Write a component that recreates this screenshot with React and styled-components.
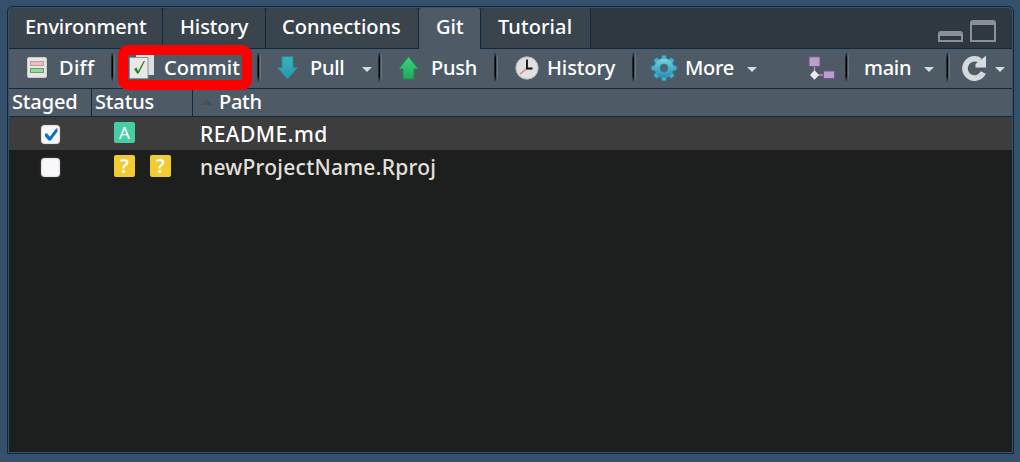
import React from 'react';
import styled, { createGlobalStyle } from 'styled-components';

const Global = createGlobalStyle`
  * { box-sizing: border-box; }
  html, body, #root { height: 100%; }
  body {
    margin: 0;
    overflow: hidden;
    background: #34506b;
    color: #fff;
    font: 500 20px/26px 'Noto Sans', 'Open Sans', sans-serif;
  }
  svg { display: block; flex: none; overflow: visible; }
`;

const line = '#0f2a40';

const Page = styled.div`
  height: 462px;
  padding: 6px 6px 8px 7px;
`;
const Pane = styled.section`
  position: relative;
  height: 100%;
  display: flex;
  flex-direction: column;
  border: 1px solid ${line};
  border-radius: 5px 5px 0 0;
  padding: 1px;
  background: #34506b;
`;
const TabStrip = styled.nav`
  display: flex;
  height: 40px;
  background: #2f3841;
  border-radius: 4px 4px 0 0;
`;
const Tab = styled.div`
  width: ${(p) => p.$width}px;
  height: ${(p) => (p.$active ? 41 : 40)}px;
  position: relative;
  padding: 6px 0 0 ${(p) => p.$pad}px;
  border-right: 1px solid ${line};
  border-radius: 3px 3px 0 0;
  background: ${(p) => (p.$active ? '#4e5b66' : '#3a444c')};
  letter-spacing: ${(p) => p.$track || 0}px;
  white-space: nowrap;
`;
const WindowButtons = styled.div`
  display: flex;
  align-items: flex-end;
  gap: 7px;
  margin: 0 16px 6px auto;
`;
const Toolbar = styled.div`
  display: flex;
  height: 41px;
  border: solid ${line};
  border-width: 1px 0;
  background: #4e5b66;
`;
const Tool = styled.div`
  display: flex;
  align-items: center;
  width: ${(p) => p.$width}px;
  padding: 0 0 2px ${(p) => p.$pad}px;
  white-space: nowrap;
`;
const Label = styled.span`
  margin-left: ${(p) => p.$gap || 0}px;
  letter-spacing: ${(p) => p.$track || 0}px;
`;
const Separator = styled.i`
  flex: none;
  width: 4px;
  height: 30px;
  margin-top: 3px;
  background: linear-gradient(90deg, #20272d 0 1px, #000 1px 2px, #485560 2px 3px, #687480 3px);
  mask-image: linear-gradient(transparent, #000 20% 80%, transparent);
`;
const Caret = styled.i`
  margin: 4px 0 0 ${(p) => p.$gap}px;
  border: solid transparent;
  border-width: 5px 5px 0;
  border-top-color: #d9dbdd;
`;
const Header = styled.div`
  display: grid;
  grid-template-columns: 83px 101px 1fr;
  height: 28px;
  background: #4e5b66;
  border-bottom: 1px solid ${line};
`;
const HeaderCell = styled.div`
  display: flex;
  align-items: center;
  padding: 0 0 1px ${(p) => p.$pad}px;
  border-right: ${(p) => (p.$last ? '0' : `1px solid ${line}`)};
  letter-spacing: ${(p) => p.$track || 0}px;
`;
const SortArrow = styled.i`
  margin-right: 6px;
  border: solid transparent;
  border-width: 0 6px 6px;
  border-bottom-color: #46515a;
`;
const Files = styled.div`
  flex: 1;
  background: #1d1f1e;
`;
const FileRow = styled.div`
  display: grid;
  grid-template-columns: 83px 101px 1fr;
  height: 33px;
  background: ${(p) => (p.$selected ? '#3d3d3d' : 'transparent')};
  color: ${(p) => (p.$selected ? '#fff' : '#e5e0dc')};
`;
const CheckCell = styled.div`
  padding: 8px 0 0 32px;
`;
const Checkbox = styled.div`
  width: 19px;
  height: 19px;
  border-radius: 4px;
  background: #f8f8fb;
  box-shadow: inset 0 0 2px #aaa, 0 0 2px #666;
`;
const StatusCell = styled.div`
  display: flex;
  gap: 15px;
  padding: 5px 0 0 22px;
`;
const Badge = styled.span`
  width: 21px;
  height: ${(p) => (p.$added ? 21 : 22)}px;
  border-radius: 2px;
  background: ${(p) => (p.$added ? '#47cda4' : '#f2cb31')};
  color: #fff;
  font-size: ${(p) => (p.$added ? 17 : 19)}px;
  font-weight: ${(p) => (p.$added ? 400 : 600)};
  line-height: 22px;
  text-align: center;
`;
const Path = styled.div`
  padding: 4px 0 0 7px;
  font-size: 21px;
  letter-spacing: ${(p) => p.$track}px;
`;
const Highlight = styled.div`
  position: absolute;
  left: 110px;
  top: 38px;
  width: 134px;
  height: 45px;
  border: 10px solid #f00;
  border-radius: 10px;
  pointer-events: none;
`;

const DiffIcon = () => (
  <svg width="20" height="21" viewBox="0 0 20 21">
    <rect x=".5" y=".5" width="19" height="20" rx="1.5" fill="#e6e7e5" stroke="#c9cdcb" />
    <rect x="3.5" y="4.5" width="13" height="4" fill="#e9c0c2" stroke="#c99699" />
    <rect x="3.5" y="11.5" width="13" height="4" fill="#98d49b" stroke="#5fa66a" />
  </svg>
);
const CommitIcon = () => (
  <svg width="25" height="25" viewBox="0 0 25 25">
    <path d="M7 0h18v20H7z" fill="#dcdfdf" />
    <path d="M.5 2.5h18.500v21H.5z" fill="#e8e9e7" stroke="#8b9296" />
    <path d="M5 14l2.500-1.500 1.700 3.500 5.500-10 1.300 0-6.300 12.500h-1.700z" fill="#26862a" />
  </svg>
);
const Arrow = ({ up }) => (
  <svg width="21" height="24" viewBox="0 0 21 24">
    <defs>
      <linearGradient id={up ? 'push' : 'pull'} x2="0" y2="1">
        <stop stopColor={up ? '#43cf80' : '#3bb2ba'} />
        <stop offset="1" stopColor={up ? '#21a95d' : '#2798aa'} />
      </linearGradient>
    </defs>
    <path
      d={up ? 'M10.500 .7L20.300 13H16v10H5V13H.7z' : 'M5 .7h11v11h4.300L10.500 23 .7 11.700H5z'}
      fill={`url(#${up ? 'push' : 'pull'})`}
      stroke={up ? '#168d4b' : '#258d99'}
      strokeLinejoin="round"
    />
  </svg>
);
const ClockIcon = () => (
  <svg width="24" height="24" viewBox="0 0 24 24">
    <circle cx="12" cy="12" r="11.200" fill="#dfe0df" stroke="#b0b3b3" />
    <path d="M12 12.500L5 18" stroke="#e97c7b" strokeWidth="1.400" />
    <path d="M12 3.500v9h5.500" fill="none" stroke="#111" strokeWidth="1.800" />
  </svg>
);
const GearIcon = () => (
  <svg width="28" height="28" viewBox="-14 -14 28 28">
    <defs>
      <linearGradient id="gear" x2="0" y2="1">
        <stop stopColor="#7bd4de" />
        <stop offset="1" stopColor="#258eb5" />
      </linearGradient>
      <path id="tooth" d="M-3.500-8L-2-13H2L3.500-8z" />
    </defs>
    <g stroke="#2b7890" strokeWidth="1" strokeLinejoin="round" fill="#49adc7">
      {[0, 45, 90, 135, 180, 225, 270, 315].map((a) => (
        <use key={a} href="#tooth" transform={`rotate(${a})`} />
      ))}
    </g>
    <circle r="9.500" fill="url(#gear)" />
    <circle r="4" fill="#52616d" stroke="#2d839d" />
  </svg>
);
const BranchIcon = () => (
  <svg width="27" height="24" viewBox="0 0 27 24">
    <path d="M6.500 10v9H15" fill="none" stroke="#a99bb5" strokeWidth="1.300" />
    <g fill="#b6a2c7" stroke="#784f94">
      <path d="M1 .8h11v9.700H1zM15.500 15h11v7.500h-11z" />
    </g>
    <path d="M6.500 14.200l4.500 4.800-4.500 4.800L2 19z" fill="#eee8f1" />
  </svg>
);
const RefreshIcon = () => (
  <svg width="26" height="26" viewBox="0 0 26 26">
    <path d="M22.300 17.500A9.600 9.600 0 1 1 19 5.500" fill="none" stroke="#d5d9df" strokeWidth="5.600" />
    <path d="M25 .8v11.700H14.500v-3.500z" fill="#d9dddf" />
  </svg>
);
const Check = () => (
  <svg width="19" height="19" viewBox="0 0 19 19">
    <path d="M4 8.500h2.200l2.600 3.200L14.500 4.200 16.500 3v3.500L9.800 15.500H7.600L4 11.300z" fill="#0c73bf" />
  </svg>
);

export default function App() {
  return (
    <Page>
      <Global />
      <Pane>
        <TabStrip>
          <Tab $width={154} $pad={16} $track={-0.15}>Environment</Tab>
          <Tab $width={103} $pad={17} $track={-0.1}>History</Tab>
          <Tab $width={153} $pad={16}>Connections</Tab>
          <Tab $width={62} $pad={17} $active>Git</Tab>
          <Tab $width={110} $pad={17} $track={0.1}>Tutorial</Tab>
          <WindowButtons>
            <svg width="25" height="11" viewBox="0 0 25 11">
              <path d="M0 11V3q0-3 3-3h19q3 0 3 3v8zM2 5v4h21V5z" fill="#899197" fillRule="evenodd" />
            </svg>
            <svg width="26" height="22" viewBox="0 0 26 22">
              <path d="M0 22V3q0-3 3-3h20q3 0 3 3v19zM2 5v15h22V5z" fill="#899197" fillRule="evenodd" />
            </svg>
          </WindowButtons>
        </TabStrip>
        <Toolbar>
          <Tool $width={102} $pad={18}><DiffIcon /><Label $gap={12} $track={0.3}>Diff</Label></Tool>
          <Separator />
          <Tool $width={142} $pad={14}><CommitIcon /><Label $gap={10}>Commit</Label></Tool>
          <Separator />
          <Tool $width={117} $pad={16}><Arrow /><Label $gap={12} $track={-0.3}>Pull</Label><Caret $gap={18} /></Tool>
          <Separator />
          <Tool $width={112} $pad={16}><Arrow up /><Label $gap={12} $track={-0.2}>Push</Label></Tool>
          <Separator />
          <Tool $width={134} $pad={17}><ClockIcon /><Label $gap={8} $track={-0.1}>History</Label></Tool>
          <Separator />
          <Tool $width={209} $pad={14}>
            <GearIcon /><Label $gap={7} $track={-0.3}>More</Label><Caret $gap={13} />
            <Label $gap={51}><BranchIcon /></Label>
          </Tool>
          <Separator />
          <Tool $width={97} $pad={14}><Label $gap={1} $track={-0.3}>main</Label><Caret $gap={13} /></Tool>
          <Separator />
          <Tool $width={62} $pad={11}><RefreshIcon /><Caret $gap={8} /></Tool>
        </Toolbar>
        <Header>
          <HeaderCell $pad={3} $track={-0.15}>Staged</HeaderCell>
          <HeaderCell $pad={3} $track={-0.15}>Status</HeaderCell>
          <HeaderCell $pad={8} $track={-0.3} $last><SortArrow />Path</HeaderCell>
        </Header>
        <Files>
          <FileRow $selected>
            <CheckCell><Checkbox><Check /></Checkbox></CheckCell>
            <StatusCell><Badge $added>A</Badge></StatusCell>
            <Path $track={0.45}>README.md</Path>
          </FileRow>
          <FileRow>
            <CheckCell><Checkbox /></CheckCell>
            <StatusCell><Badge>?</Badge><Badge>?</Badge></StatusCell>
            <Path $track={0.25}>newProjectName.Rproj</Path>
          </FileRow>
        </Files>
        <Highlight />
      </Pane>
    </Page>
  );
}
